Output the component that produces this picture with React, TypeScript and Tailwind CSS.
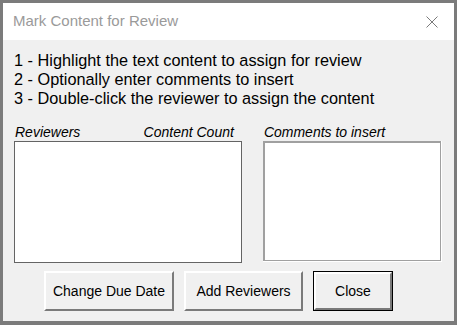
import React from 'react';

const font = { fontFamily: '"Liberation Sans", Arial, sans-serif' };

const RaisedButton = ({ label, width, isDefault }: { label: string; width: string; isDefault?: boolean }) => (
  <button
    className={`${width} h-[40px] ${isDefault ? 'border border-black' : ''} bg-[#f0f0f0] text-[14px] text-black`}
  >
    <div className="h-full w-full border-t-2 border-l-2 border-t-white border-l-white border-r-2 border-b-2 border-r-[#7a7a7a] border-b-[#7a7a7a] flex items-center justify-center">
      {label}
    </div>
  </button>
);

export default function App() {
  return (
    <div className="w-[457px] h-[325px] border-l-[3px] border-t-[3px] border-r-[3px] border-b-[4px] border-[#7b7b7b] flex flex-col" style={font}>
      {/* Title bar */}
      <div className="h-[37px] bg-white flex items-center justify-between pl-[10px] pr-[16px]">
        <span className="text-[15px] text-[#9a9a9a]">Mark Content for Review</span>
        <svg width="12" height="12" viewBox="0 0 12 12" className="mt-[1px]">
          <path d="M0.5 0.5 L11.5 11.5 M11.5 0.5 L0.5 11.5" stroke="#7a7a7a" strokeWidth="1" fill="none" />
        </svg>
      </div>

      {/* Body */}
      <div className="flex-1 bg-[#f0f0f0] pl-[11px] pr-[12px] pt-[11px]">
        <div className="text-[16.3px] leading-[19px] text-black">
          <p>1 - Highlight the text content to assign for review</p>
          <p>2 - Optionally enter comments to insert</p>
          <p>3 - Double-click the reviewer to assign the content</p>
        </div>

        <div className="flex gap-[21px] mt-[15px]">
          <div className="w-[229px] flex flex-col">
            <div className="flex justify-between text-[14px] italic leading-[18px] h-[18px] pl-[1px] pr-[8px]">
              <span>Reviewers</span>
              <span>Content Count</span>
            </div>
            <div className="h-[122px] bg-white border border-[#646464]" />
          </div>
          <div className="w-[180px] flex flex-col">
            <div className="text-[14px] italic leading-[18px] h-[18px] pl-[1px]">Comments to insert</div>
            <div className="h-[121px] border-r border-b border-white">
              <div className="h-full bg-white border-t-2 border-l-2 border-r border-b border-[#a0a0a0]" />
            </div>
          </div>
        </div>

        <div className="flex gap-[10px] mt-[8px] pl-[30px]">
          <RaisedButton label="Change Due Date" width="w-[130px]" />
          <RaisedButton label="Add Reviewers" width="w-[119px]" />
          <RaisedButton label="Close" width="w-[80px]" isDefault />
        </div>
      </div>
    </div>
  );
}
